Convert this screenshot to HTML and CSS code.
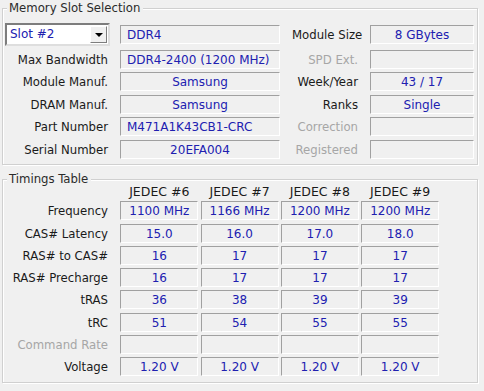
FILE: index.html
```html
<!DOCTYPE html>
<html lang="en">
<head>
    <meta charset="UTF-8">
    <title>SPD</title>
    <link rel="stylesheet" href="styles.css">
</head>
<body>
    <div class="group slot-group">
        <span class="legend">Memory Slot Selection</span>
        <div class="slot-grid">
            <div class="combo">
                <span class="combo-text">Slot #2</span>
                <span class="combo-btn"><span class="arrow"></span></span>
            </div>
            <div class="field left">DDR4</div>
            <div class="label">Module Size</div>
            <div class="field">8 GBytes</div>

            <div class="label">Max Bandwidth</div>
            <div class="field left">DDR4-2400 (1200 MHz)</div>
            <div class="label off">SPD Ext.</div>
            <div class="field"></div>

            <div class="label">Module Manuf.</div>
            <div class="field">Samsung</div>
            <div class="label">Week/Year</div>
            <div class="field">43 / 17</div>

            <div class="label">DRAM Manuf.</div>
            <div class="field">Samsung</div>
            <div class="label">Ranks</div>
            <div class="field">Single</div>

            <div class="label">Part Number</div>
            <div class="field left">M471A1K43CB1-CRC</div>
            <div class="label off">Correction</div>
            <div class="field"></div>

            <div class="label">Serial Number</div>
            <div class="field">20EFA004</div>
            <div class="label off">Registered</div>
            <div class="field"></div>
        </div>
    </div>

    <div class="group timing-group">
        <span class="legend">Timings Table</span>
        <div class="timing-grid">
            <div></div>
            <div class="head">JEDEC #6</div>
            <div class="head">JEDEC #7</div>
            <div class="head">JEDEC #8</div>
            <div class="head">JEDEC #9</div>

            <div class="label">Frequency</div>
            <div class="field">1100 MHz</div>
            <div class="field">1166 MHz</div>
            <div class="field">1200 MHz</div>
            <div class="field">1200 MHz</div>

            <div class="label">CAS# Latency</div>
            <div class="field">15.0</div>
            <div class="field">16.0</div>
            <div class="field">17.0</div>
            <div class="field">18.0</div>

            <div class="label">RAS# to CAS#</div>
            <div class="field">16</div>
            <div class="field">17</div>
            <div class="field">17</div>
            <div class="field">17</div>

            <div class="label">RAS# Precharge</div>
            <div class="field">16</div>
            <div class="field">17</div>
            <div class="field">17</div>
            <div class="field">17</div>

            <div class="label">tRAS</div>
            <div class="field">36</div>
            <div class="field">38</div>
            <div class="field">39</div>
            <div class="field">39</div>

            <div class="label">tRC</div>
            <div class="field">51</div>
            <div class="field">54</div>
            <div class="field">55</div>
            <div class="field">55</div>

            <div class="label off">Command Rate</div>
            <div class="field"></div>
            <div class="field"></div>
            <div class="field"></div>
            <div class="field"></div>

            <div class="label">Voltage</div>
            <div class="field">1.20 V</div>
            <div class="field">1.20 V</div>
            <div class="field">1.20 V</div>
            <div class="field">1.20 V</div>
        </div>
    </div>
</body>
</html>
```

FILE: styles.css
```css
body {
    margin: 0;
    width: 484px;
    height: 391px;
    overflow: hidden;
    background-color: #f0f0f0;
    font-family: "DejaVu Sans Condensed", "DejaVu Sans", sans-serif;
    font-stretch: condensed;
    font-size: 13px;
    color: #1a1a1a;
}
.group {
    position: relative;
    margin-left: 2px;
    width: 474px;
    border: 1px solid #d0d0d0;
    box-shadow: inset 1px 1px 0 #fff, 1px 1px 0 #fff;
}
.slot-group {
    margin-top: 8px;
    height: 155px;
}
.timing-group {
    margin-top: 14px;
    height: 202px;
}
.legend {
    position: absolute;
    top: -9px;
    left: 4px;
    padding: 0 3px 0 2px;
    background-color: #f0f0f0;
    line-height: 16px;
    color: #2b2b2b;
}
.label {
    text-align: right;
    line-height: 19px;
    white-space: nowrap;
}
.off {
    color: #a6a6a6;
}
.field {
    height: 19px;
    box-sizing: border-box;
    border-top: 1px solid #a0a0a0;
    border-left: 1px solid #a0a0a0;
    border-right: 1px solid #fff;
    border-bottom: 1px solid #fff;
    font-family: "DejaVu Sans", sans-serif;
    font-stretch: normal;
    font-size: 12px;
    color: #2020b0;
    text-align: center;
    line-height: 18px;
    white-space: nowrap;
    overflow: hidden;
}
.field.left {
    text-align: left;
    padding-left: 6px;
}

/* memory slot */
.slot-grid {
    display: grid;
    grid-template-columns: 105px 160px 66px 104px;
    grid-template-rows: 23px repeat(5, 19px);
    column-gap: 12px;
    row-gap: 3.6px;
    padding: 14px 0 0 0;
    align-items: center;
}
.combo {
    display: flex;
    width: 105px;
    height: 23px;
    margin-left: 2px;
    box-sizing: border-box;
    background-color: #fff;
    border-top: 2px solid #7d7d7d;
    border-left: 2px solid #7d7d7d;
    border-right: 2px solid #dedede;
    border-bottom: 2px solid #dedede;
}
.combo-text {
    flex: 1;
    padding-left: 3px;
    line-height: 19px;
    font-family: "DejaVu Sans", sans-serif;
    font-stretch: normal;
    font-size: 12px;
    color: #2020b0;
}
.combo-btn {
    width: 17px;
    height: 17px;
    margin: 1px;
    background-color: #f0f0f0;
    border-top: 1px solid #fff;
    border-left: 1px solid #fff;
    border-right: 1px solid #7d7d7d;
    border-bottom: 1px solid #7d7d7d;
    box-sizing: border-box;
    display: flex;
    align-items: center;
    justify-content: center;
}
.arrow {
    width: 0;
    height: 0;
    border-left: 4px solid transparent;
    border-right: 4px solid transparent;
    border-top: 4px solid #000;
}

/* timings */
.timing-grid {
    display: grid;
    grid-template-columns: 115px repeat(4, 78px);
    grid-template-rows: 13px repeat(8, 19px);
    column-gap: 2.3px;
    row-gap: 3.3px;
    padding: 5px 0 0 0;
}
.timing-grid .label {
    padding-right: 10px;
}
.head {
    text-align: center;
    line-height: 13px;
    white-space: nowrap;
    font-family: "DejaVu Sans", sans-serif;
    font-stretch: normal;
    font-size: 12.5px;
}
```
